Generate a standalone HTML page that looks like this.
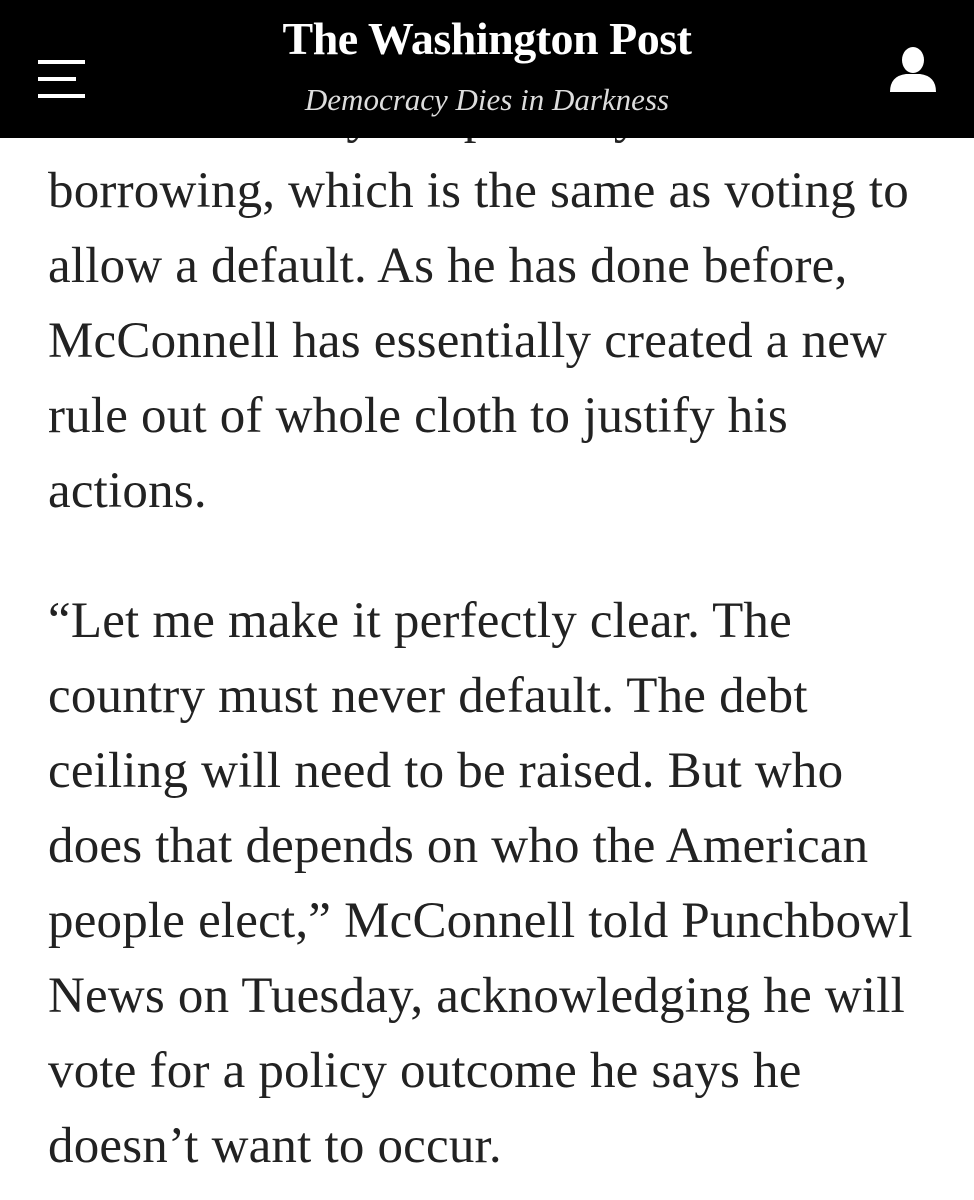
<!DOCTYPE html>
<html><head><meta charset="utf-8"><style>
html,body{margin:0;padding:0;background:#fff;width:974px;height:1200px;overflow:hidden;position:relative}
.hdr{position:absolute;left:0;top:0;width:974px;height:138px;background:#000;z-index:2}
.logo{position:absolute;left:0;width:974px;top:12px;text-align:center;color:#fff;font-family:"Liberation Serif",serif;font-weight:bold;font-size:46px;letter-spacing:-0.5px}
.tag{position:absolute;left:0;width:974px;top:82px;text-align:center;color:#ddd;font-family:"Liberation Serif",serif;font-style:italic;font-size:31px}
.hb{position:absolute;left:38px;width:47px;height:4px;background:#fff}
.art{position:absolute;left:48px;top:79px;width:926px;font-family:"Liberation Serif",serif;font-size:51px;letter-spacing:0.2px;line-height:75px;color:#222;z-index:1;white-space:nowrap}
p{margin:0 0 55px 0}
</style></head><body>
<div class="hdr">
<div class="hb" style="top:60px"></div><div class="hb" style="top:77px;width:38px"></div><div class="hb" style="top:94px"></div>
<div class="logo">The Washington Post</div>
<div class="tag">Democracy Dies in Darkness</div>
<svg style="position:absolute;left:888px;top:46px" width="50" height="48" viewBox="0 0 50 48"><ellipse cx="25" cy="14" rx="11" ry="13" fill="#fff"/><path d="M2 46 Q2 30 18 28 L32 28 Q48 30 48 46 Z" fill="#fff"/></svg>
</div>
<div class="art">
<p>Democrats may not pass any<br>borrowing, which is the same as voting to<br>allow a default. As he has done before,<br>McConnell has essentially created a new<br>rule out of whole cloth to justify his<br>actions.</p>
<p>“Let me make it perfectly clear. The<br>country must never default. The debt<br>ceiling will need to be raised. But who<br>does that depends on who the American<br>people elect,” McConnell told Punchbowl<br>News on Tuesday, acknowledging he will<br>vote for a policy outcome he says he<br>doesn’t want to occur.</p>
</div>
</body></html>
